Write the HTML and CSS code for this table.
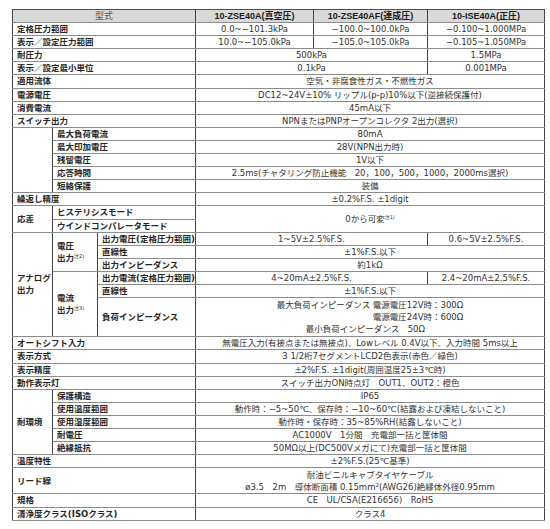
FILE: index.html
```html
<!DOCTYPE html>
<html lang="ja">
<head>
<meta charset="utf-8">
<link rel="stylesheet" href="styles.css">
</head>
<body>
<table class="spec">
  <colgroup>
    <col class="c1"><col class="c2"><col class="c3"><col class="c4"><col class="c5"><col class="c6">
  </colgroup>
  <tr class="head">
    <th colspan="3" class="kata">型式</th>
    <th>10-ZSE40A(真空圧)</th>
    <th>10-ZSE40AF(連成圧)</th>
    <th>10-ISE40A(正圧)</th>
  </tr>
  <tr><td colspan="3" class="lb">定格圧力範囲</td><td class="v">0.0~−101.3kPa</td><td class="v">−100.0~100.0kPa</td><td class="v">−0.100~1.000MPa</td></tr>
  <tr><td colspan="3" class="lb">表示／設定圧力範囲</td><td class="v">10.0~−105.0kPa</td><td class="v">−105.0~105.0kPa</td><td class="v">−0.105~1.050MPa</td></tr>
  <tr><td colspan="3" class="lb">耐圧力</td><td colspan="2" class="v">500kPa</td><td class="v">1.5MPa</td></tr>
  <tr><td colspan="3" class="lb">表示／設定最小単位</td><td colspan="2" class="v">0.1kPa</td><td class="v">0.001MPa</td></tr>
  <tr><td colspan="3" class="lb">適用流体</td><td colspan="3" class="v">空気・非腐食性ガス・不燃性ガス</td></tr>
  <tr><td colspan="3" class="lb">電源電圧</td><td colspan="3" class="v">DC12~24V±10% リップル(p-p)10%以下(逆接続保護付)</td></tr>
  <tr><td colspan="3" class="lb">消費電流</td><td colspan="3" class="v">45mA以下</td></tr>
  <tr><td colspan="3" class="lb">スイッチ出力</td><td colspan="3" class="v">NPNまたはPNPオープンコレクタ 2出力(選択)</td></tr>
  <tr><td rowspan="5" class="lb"></td><td colspan="2" class="lb">最大負荷電流</td><td colspan="3" class="v">80mA</td></tr>
  <tr><td colspan="2" class="lb">最大印加電圧</td><td colspan="3" class="v">28V(NPN出力時)</td></tr>
  <tr><td colspan="2" class="lb">残留電圧</td><td colspan="3" class="v">1V以下</td></tr>
  <tr><td colspan="2" class="lb">応答時間</td><td colspan="3" class="v">2.5ms(チャタリング防止機能　20，100，500，1000，2000ms選択)</td></tr>
  <tr><td colspan="2" class="lb">短絡保護</td><td colspan="3" class="v">装備</td></tr>
  <tr><td colspan="3" class="lb">繰返し精度</td><td colspan="3" class="v">±0.2%F.S. ±1digit</td></tr>
  <tr><td rowspan="2" class="lb">応差</td><td colspan="2" class="lb">ヒステリシスモード</td><td rowspan="2" colspan="3" class="v">0から可変<sup>注1)</sup></td></tr>
  <tr><td colspan="2" class="lb">ウインドコンパレータモード</td></tr>
  <tr><td rowspan="6" class="lb">アナログ<br>出力</td><td rowspan="3" class="lb">電圧<br>出力<sup>注2)</sup></td><td class="lb">出力電圧(定格圧力範囲)</td><td colspan="2" class="v">1~5V±2.5%F.S.</td><td class="v">0.6~5V±2.5%F.S.</td></tr>
  <tr><td class="lb">直線性</td><td colspan="3" class="v">±1%F.S.以下</td></tr>
  <tr><td class="lb">出力インピーダンス</td><td colspan="3" class="v">約1kΩ</td></tr>
  <tr><td rowspan="3" class="lb">電流<br>出力<sup>注3)</sup></td><td class="lb">出力電流(定格圧力範囲)</td><td colspan="2" class="v">4~20mA±2.5%F.S.</td><td class="v">2.4~20mA±2.5%F.S.</td></tr>
  <tr><td class="lb">直線性</td><td colspan="3" class="v">±1%F.S.以下</td></tr>
  <tr class="tall"><td class="lb">負荷インピーダンス</td><td colspan="3" class="v">
    <div class="imp">
      <div class="imp-line">最大負荷インピーダンス 電源電圧12V時：300Ω</div>
      <div class="imp-line imp-right">電源電圧24V時：600Ω</div>
      <div class="imp-line imp-min">最小負荷インピーダンス　50Ω</div>
    </div>
  </td></tr>
  <tr><td colspan="3" class="lb">オートシフト入力</td><td colspan="3" class="v">無電圧入力(有接点または無接点)、Lowレベル 0.4V以下、入力時間 5ms以上</td></tr>
  <tr><td colspan="3" class="lb">表示方式</td><td colspan="3" class="v">3 1/2桁7セグメントLCD2色表示(赤色／緑色)</td></tr>
  <tr><td colspan="3" class="lb">表示精度</td><td colspan="3" class="v">±2%F.S. ±1digit(周囲温度25±3℃時)</td></tr>
  <tr><td colspan="3" class="lb">動作表示灯</td><td colspan="3" class="v">スイッチ出力ON時点灯　OUT1、OUT2：橙色</td></tr>
  <tr><td rowspan="5" class="lb">耐環境</td><td colspan="2" class="lb">保護構造</td><td colspan="3" class="v">IP65</td></tr>
  <tr><td colspan="2" class="lb">使用温度範囲</td><td colspan="3" class="v">動作時：−5~50℃、保存時：−10~60℃(結露および凍結しないこと)</td></tr>
  <tr><td colspan="2" class="lb">使用湿度範囲</td><td colspan="3" class="v">動作時・保存時：35~85%RH(結露しないこと)</td></tr>
  <tr><td colspan="2" class="lb">耐電圧</td><td colspan="3" class="v">AC1000V　1分間　充電部一括と筐体間</td></tr>
  <tr><td colspan="2" class="lb">絶縁抵抗</td><td colspan="3" class="v">50MΩ以上(DC500Vメガにて)充電部一括と筐体間</td></tr>
  <tr><td colspan="3" class="lb">温度特性</td><td colspan="3" class="v">±2%F.S.(25℃基準)</td></tr>
  <tr class="lead"><td colspan="3" class="lb">リード線</td><td colspan="3" class="v">耐油ビニルキャブタイヤケーブル<br>ø3.5　2m　導体断面積 0.15mm<sup class="sq">2</sup>(AWG26)絶縁体外径0.95mm</td></tr>
  <tr><td colspan="3" class="lb">規格</td><td colspan="3" class="v">CE　UL/CSA(E216656)　RoHS</td></tr>
  <tr><td colspan="3" class="lb">清浄度クラス(ISOクラス)</td><td colspan="3" class="v">クラス4</td></tr>
</table>
</body>
</html>
```
FILE: styles.css
```css
html, body {
  margin: 0;
  padding: 0;
  background: #ffffff;
}

body {
  padding: 9px 0 0 12px;
  font-family: "DejaVu Sans", "Noto Sans CJK JP", sans-serif;
  font-size: 8.5px;
  color: #333333;
}

.spec {
  width: 532px;
  table-layout: fixed;
  border-collapse: collapse;
  border: 1px solid #505050;
}

.c1 { width: 40px; }
.c2 { width: 45px; }
.c3 { width: 98px; }
.c4 { width: 118px; }
.c5 { width: 114px; }
.c6 { width: 117px; }

.spec th,
.spec td {
  padding: 0 4px;
  line-height: 12.1px;
  border-top: 1px solid #8c8c8c;
  border-bottom: 1px solid #8c8c8c;
  border-left: 1px solid #444444;
  border-right: 1px solid #444444;
  white-space: nowrap;
  overflow: visible;
}

.head th {
  background: #d9d9d9;
  font-family: "Liberation Sans", "Noto Sans CJK JP", sans-serif;
  font-size: 9px;
  font-weight: bold;
  color: #1a1a1a;
  text-align: center;
  border-top: 1px solid #505050;
}

.head th.kata {
  font-weight: normal;
  color: #555555;
}

.lb {
  text-align: left;
  font-weight: bold;
  color: #262626;
  vertical-align: middle;
}

.v {
  text-align: center;
  color: #333333;
  vertical-align: middle;
}

sup {
  font-size: 5px;
  line-height: 0;
  vertical-align: 3px;
  font-weight: normal;
}

sup.sq {
  font-size: 5.5px;
}

.tall td {
  padding-top: 1px;
  padding-bottom: 1px;
}

.imp {
  display: inline-block;
  text-align: left;
}

.imp-right {
  text-align: right;
}

.imp-min {
  padding-left: 29px;
}

.lead td {
  padding-top: 0.5px;
  padding-bottom: 0.5px;
}
```
